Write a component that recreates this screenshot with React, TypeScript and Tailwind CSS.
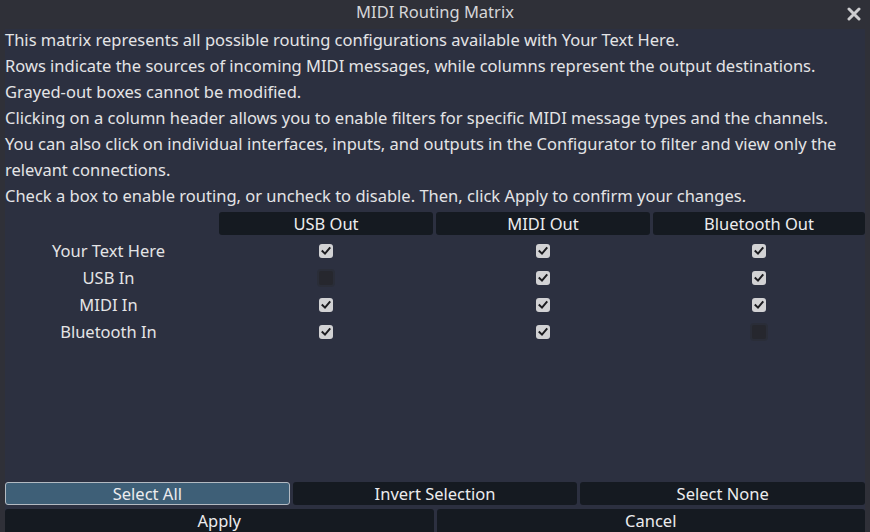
import React from "react";

const font = { fontFamily: '"Noto Sans", "Open Sans", sans-serif' };

function Check({ state }: { state: "on" | "disabled" }) {
  if (state === "disabled") {
    return <div className="w-[14px] h-[14px] rounded-[2px] bg-[#26272e] ring-2 ring-[#2a2d38]" />;
  }
  return (
    <div className="w-[14px] h-[14px] rounded-[3px] bg-[#d2d2d4] flex items-center justify-center">
      <svg width="10" height="10" viewBox="0 0 10 10">
        <path d="M1.5 5.2 L4 7.6 L8.6 2.2" fill="none" stroke="#1b1b1f" strokeWidth="2" strokeLinecap="square" />
      </svg>
    </div>
  );
}

const lines = [
  "This matrix represents all possible routing configurations available with Your Text Here.",
  "Rows indicate the sources of incoming MIDI messages, while columns represent the output destinations.",
  "Grayed-out boxes cannot be modified.",
  "Clicking on a column header allows you to enable filters for specific MIDI message types and the channels.",
  "You can also click on individual interfaces, inputs, and outputs in the Configurator to filter and view only the",
  "relevant connections.",
  "Check a box to enable routing, or uncheck to disable. Then, click Apply to confirm your changes.",
];

const rows: { name: string; cells: ("on" | "disabled")[] }[] = [
  { name: "Your Text Here", cells: ["on", "on", "on"] },
  { name: "USB In", cells: ["disabled", "on", "on"] },
  { name: "MIDI In", cells: ["on", "on", "on"] },
  { name: "Bluetooth In", cells: ["on", "on", "disabled"] },
];

export default function App() {
  return (
    <div className="w-[870px] h-[532px] bg-[#2f3038] flex flex-col overflow-hidden text-[16.5px]" style={font}>
      <div className="h-[29px] shrink-0 relative flex items-center justify-center text-[#d6d6d8]">
        <span className="leading-none -mt-[5px]">MIDI Routing Matrix</span>
        <svg className="absolute right-[9px] top-[7px]" width="14" height="14" viewBox="0 0 14 14">
          <path d="M2 2 L12 12 M12 2 L2 12" stroke="#cdcdd0" strokeWidth="3" strokeLinecap="round" />
        </svg>
      </div>
      <div className="flex-1 mx-[5px] bg-[#2c3040] flex flex-col text-[#e4e4e6]">
        <div className="flex flex-col">
          {lines.map((l, i) => (
            <div key={i} className="h-[26px] leading-[22px] whitespace-nowrap">
              {l}
            </div>
          ))}
        </div>
        <div className="mt-[1px] grid grid-cols-[211px_214px_214px_1fr] gap-x-[3px] gap-y-[4px]">
          <div />
          {["USB Out", "MIDI Out", "Bluetooth Out"].map((h) => (
            <div key={h} className="h-[23px] rounded-[3px] bg-[#151a21] flex items-center justify-center text-[#ececee] pt-[1px]">
              {h}
            </div>
          ))}
          {rows.map((r) => (
            <React.Fragment key={r.name}>
              <div className="h-[23px] flex items-center justify-center pr-[4px] pt-[2px]">{r.name}</div>
              {r.cells.map((c, j) => (
                <div key={j} className="h-[23px] flex items-center justify-center pt-[1px]">
                  <Check state={c} />
                </div>
              ))}
            </React.Fragment>
          ))}
        </div>
        <div className="flex-1" />
        <div className="flex flex-col gap-[4px]">
          <div className="grid grid-cols-3 gap-x-[3px]">
            <div className="h-[23px] rounded-[3px] bg-[#3e5f77] border border-[#b3bac2] flex items-center justify-center text-[#ececee] pt-[1px]">
              Select All
            </div>
            <div className="h-[23px] rounded-[3px] bg-[#151a21] flex items-center justify-center text-[#ececee] pt-[1px]">
              Invert Selection
            </div>
            <div className="h-[23px] rounded-[3px] bg-[#151a21] flex items-center justify-center text-[#ececee] pt-[1px]">
              Select None
            </div>
          </div>
          <div className="grid grid-cols-2 gap-x-[3px]">
            <div className="h-[23px] rounded-t-[3px] bg-[#151a21] flex items-center justify-center text-[#ececee] pt-[2px]">
              Apply
            </div>
            <div className="h-[23px] rounded-t-[3px] bg-[#151a21] flex items-center justify-center text-[#ececee] pt-[2px]">
              Cancel
            </div>
          </div>
        </div>
      </div>
    </div>
  );
}
